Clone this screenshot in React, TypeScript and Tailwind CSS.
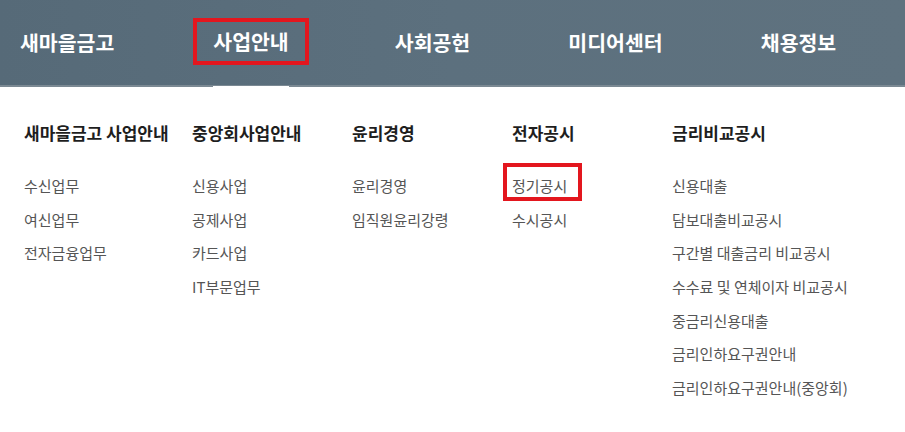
import React from 'react';

const navItems = ['사업안내', '사회공헌', '미디어센터', '채용정보'];

const columns: { title: string; width: string; items: string[] }[] = [
  { title: '새마을금고 사업안내', width: 'w-[168px]', items: ['수신업무', '여신업무', '전자금융업무'] },
  { title: '중앙회사업안내', width: 'w-[160px]', items: ['신용사업', '공제사업', '카드사업', 'IT부문업무'] },
  { title: '윤리경영', width: 'w-[160px]', items: ['윤리경영', '임직원윤리강령'] },
  { title: '전자공시', width: 'w-[160px]', items: ['정기공시', '수시공시'] },
  {
    title: '금리비교공시',
    width: 'flex-1',
    items: [
      '신용대출',
      '담보대출비교공시',
      '구간별 대출금리 비교공시',
      '수수료 및 연체이자 비교공시',
      '중금리신용대출',
      '금리인하요구권안내',
      '금리인하요구권안내(중앙회)',
    ],
  },
];

export default function App() {
  return (
    <div className="w-[905px] h-[432px] bg-white overflow-hidden" style={{ fontFamily: '"Noto Sans CJK KR", "Noto Sans", sans-serif' }}>
      {/* top nav */}
      <div className="h-[87px] bg-gradient-to-r from-[#566a78] via-[#5c707e] to-[#5f727f] border-b-2 border-[#7b8993] flex items-center">
        <div className="w-[158px] pl-[20px] text-[20.5px] font-bold text-white">새마을금고</div>
        {navItems.map((label) => (
          <div key={label} className="w-[183px] flex justify-center">
            {label === '사업안내' ? (
              <div className="relative h-[47px] px-[16px] ml-[3px] border-4 border-[#e3161e] flex items-center -mt-[3px]">
                <span className="text-[20.5px] font-bold text-white">{label}</span>
                <div className="absolute left-[16px] right-[16px] top-[64px] h-[3px] bg-white" />
              </div>
            ) : (
              <span className="text-[20.5px] font-bold text-white">{label}</span>
            )}
          </div>
        ))}
      </div>

      {/* dropdown */}
      <div className="flex pl-[24px] pt-[35px]">
        {columns.map((col) => (
          <div key={col.title} className={col.width}>
            <h3 className="text-[17px] leading-[22px] font-bold text-[#1e1e1e] whitespace-nowrap">{col.title}</h3>
            <ul className="mt-[32px] flex flex-col gap-[13.7px]">
              {col.items.map((item) => (
                <li key={item} className="text-[15px] leading-[20px] text-[#555] whitespace-nowrap">
                  {item === '정기공시' ? (
                    <span className="relative inline-block">
                      {item}
                      <span className="absolute -left-[9px] -right-[15px] -top-[13px] -bottom-[5px] border-4 border-[#e3161e]" />
                    </span>
                  ) : (
                    item
                  )}
                </li>
              ))}
            </ul>
          </div>
        ))}
      </div>
    </div>
  );
}
